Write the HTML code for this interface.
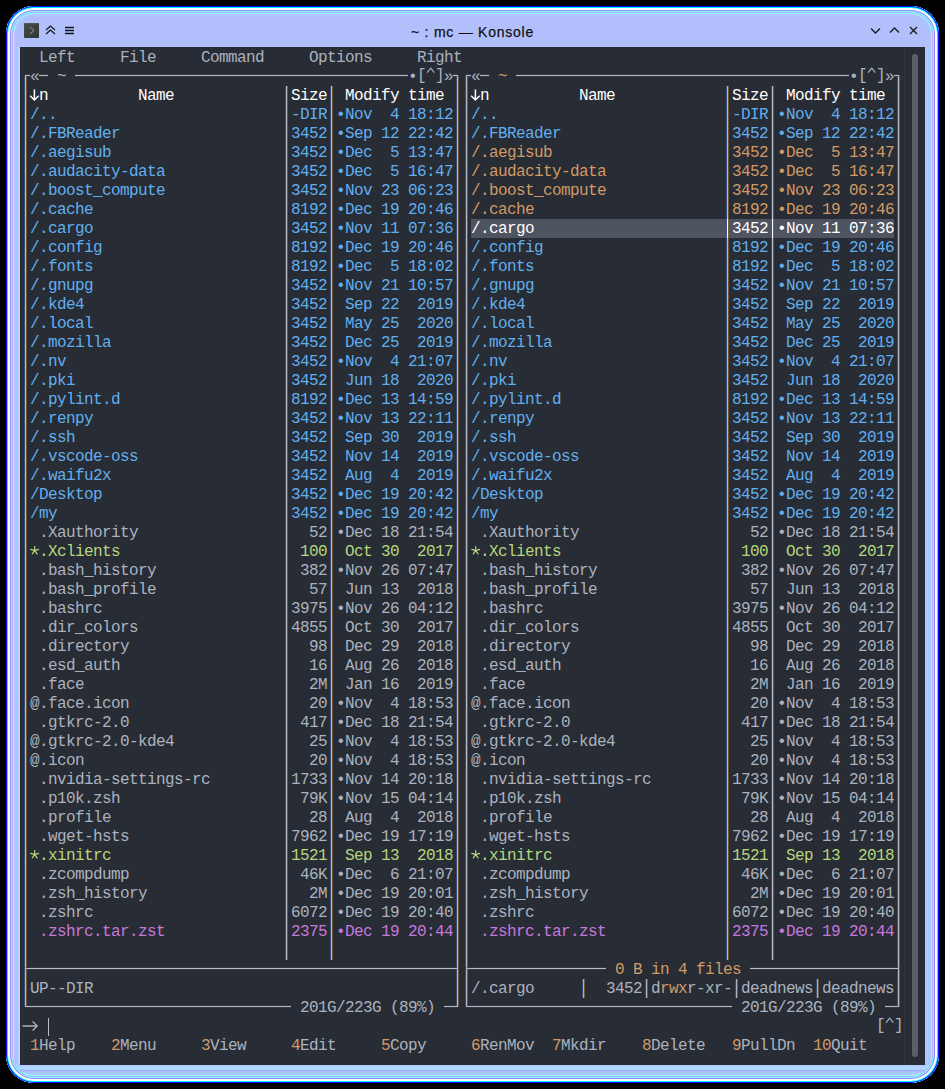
<!DOCTYPE html>
<html><head><meta charset="utf-8">
<style>
html,body{margin:0;padding:0;background:#000;width:945px;height:1089px;overflow:hidden;position:relative}
.win{position:absolute;left:6px;top:6px;width:933px;height:1077px;border-radius:28px;background:#b1c0fd;
box-shadow: inset 0 0 0 1px #1010ff, inset 0 0 0 2px #00f0ff, inset 0 0 0 4px #ffffff, inset 0 0 0 5px #8c8cff, inset 0 0 0 6px #80ffff, inset 0 0 0 7px #b0b0ff, inset 0 0 0 8px #90ffff, inset 0 0 0 9px #c0c0ff, inset 0 0 0 10px #a0ccff;}
.title{position:absolute;left:0;top:22px;width:945px;text-align:center;font-family:"Liberation Sans",sans-serif;font-size:14px;letter-spacing:0.75px;color:#111;line-height:20px;-webkit-text-stroke:0.25px #111}
.term{position:absolute;left:20px;top:47px;width:905px;height:1018px;background:#282c34}
.t{position:absolute;font-family:"Liberation Mono",monospace;font-size:16px;letter-spacing:-0.6px;line-height:19px;height:19px;white-space:pre;margin-top:1px}
.b{font-weight:normal}
.hl{position:absolute;height:1px;box-shadow:0 -1px 0 rgba(80,86,100,.35),0 1px 0 rgba(80,86,100,.35)}
.vl{position:absolute;width:1px;box-shadow:-1px 0 0 rgba(50,90,150,.75),1px 0 0 rgba(140,100,60,.75)}
.r{position:absolute}
.sb{position:absolute;left:904px;top:47px;width:1px;height:1018px;background:#33373f}
.handle{position:absolute;left:912px;top:54px;width:6px;height:1003px;border-radius:3px;background:#5a5e66}
</style></head><body>
<div class="win"></div>
<div class="title">~ : mc — Konsole</div>
<svg style="position:absolute;left:0;top:0" width="945" height="47">
 <defs><linearGradient id="kg" x1="0" y1="0" x2="1" y2="1"><stop offset="0" stop-color="#4a504c"/><stop offset="1" stop-color="#2e3230"/></linearGradient></defs>
 <rect x="24" y="23" width="15" height="15" rx="0.8" fill="url(#kg)"/><rect x="24" y="23" width="15" height="1" fill="#5a605c" opacity="0.6"/>
 <path d="M30 27 L34 30.5 L30 34" stroke="#a8aca8" stroke-width="0.8" fill="none"/>
 <path d="M46 30 L50.5 26 L55 30 M46 34 L50.5 30 L55 34" stroke="#111" stroke-width="1.1" fill="none"/>
 <path d="M65 27.5 H74 M65 30.5 H74 M65 33.5 H74" stroke="#111" stroke-width="1.4" fill="none"/>
 <path d="M871 28.5 L875.5 33 L880 28.5" stroke="#1b1b1b" stroke-width="1.4" fill="none"/>
 <path d="M890 32.5 L894.5 28 L899 32.5" stroke="#1b1b1b" stroke-width="1.4" fill="none"/>
 <path d="M910 27 L917 34 M917 27 L910 34" stroke="#1b1b1b" stroke-width="1.4" fill="none"/>
</svg>
<div class="r" style="left:14px;top:47px;width:6px;height:1018px;background:linear-gradient(90deg,#c0c0ff 0,#c0c0ff 1px,#9cccff 1px,#9cccff 3px,#c0c0ff 3px,#c0c0ff 5px,#bcdcff 5px)"></div>
<div class="r" style="left:925px;top:47px;width:6px;height:1018px;background:linear-gradient(90deg,#a8c8ff 0,#a8c8ff 2px,#c0c0ff 2px,#c0c0ff 3px,#9cccff 3px,#9cccff 5px,#c4c0ff 5px)"></div>
<div class="r" style="left:20px;top:1065px;width:905px;height:8px;background:linear-gradient(180deg,#b8c4fc 0,#b0d4ff 1px,#b4d8ff 4px,#90c4ff 5px,#b4a8ff 6px,#a4ccff 7px)"></div>
<div class="term"></div>
<div class="sb"></div>
<div class="handle"></div>
<div class="t" style="left:39px;top:48px;color:#abb2bf">Left</div>
<div class="t" style="left:120px;top:48px;color:#abb2bf">File</div>
<div class="t" style="left:201px;top:48px;color:#abb2bf">Command</div>
<div class="t" style="left:309px;top:48px;color:#abb2bf">Options</div>
<div class="t" style="left:417px;top:48px;color:#abb2bf">Right</div>
<div class="vl" style="left:25px;top:75px;height:932px;background:#b4bac6"></div>
<div class="vl" style="left:457px;top:75px;height:932px;background:#b4bac6"></div>
<div class="hl" style="left:25px;top:75px;width:5px;background:#b4bac6"></div>
<div class="hl" style="left:39px;top:75px;width:9px;background:#b4bac6"></div>
<div class="hl" style="left:75px;top:75px;width:333px;background:#b4bac6"></div>
<div class="hl" style="left:453px;top:75px;width:5px;background:#b4bac6"></div>
<div class="t" style="left:30px;top:67px;color:#abb2bf">«</div>
<div class="t" style="left:57px;top:67px;color:#abb2bf">~</div>
<div class="t" style="left:408px;top:67px;color:#abb2bf">•</div>
<div class="t" style="left:417px;top:66px;color:#abb2bf">[ ]</div>
<svg class="r" style="left:426px;top:67px" width="9" height="19"><path d="M1.1 5.6 L4.7 1.2 L8.3 5.6" stroke="#abb2bf" stroke-width="1.2" fill="none"/></svg>
<div class="t" style="left:444px;top:67px;color:#abb2bf">»</div>
<div class="vl" style="left:286px;top:86px;height:133px;background:#b4bac6"></div>
<div class="vl" style="left:286px;top:219px;height:19px;background:#b4bac6"></div>
<div class="vl" style="left:286px;top:238px;height:722px;background:#b4bac6"></div>
<div class="vl" style="left:331px;top:86px;height:133px;background:#b4bac6"></div>
<div class="vl" style="left:331px;top:219px;height:19px;background:#b4bac6"></div>
<div class="vl" style="left:331px;top:238px;height:722px;background:#b4bac6"></div>
<div class="t b" style="left:39px;top:86px;color:#ffffff">n</div>
<svg class="r" style="left:21px;top:86px" width="30" height="19"><path d="M13.4 3.6 V14 M9.1 9.8 L13.4 14 L17.7 9.8" stroke="#fff" stroke-width="1.5" fill="none"/></svg>
<div class="t b" style="left:138px;top:86px;color:#ffffff">Name</div>
<div class="t b" style="left:291px;top:86px;color:#ffffff">Size</div>
<div class="t b" style="left:345px;top:86px;color:#ffffff">Modify time</div>
<div class="t" style="left:30px;top:105px;color:#61afef">/..</div>
<div class="t" style="left:291px;top:105px;color:#61afef">-DIR</div>
<div class="t" style="left:336px;top:105px;color:#61afef">•Nov  4 18:12</div>
<div class="t" style="left:30px;top:124px;color:#61afef">/.FBReader</div>
<div class="t" style="left:291px;top:124px;color:#61afef">3452</div>
<div class="t" style="left:336px;top:124px;color:#61afef">•Sep 12 22:42</div>
<div class="t" style="left:30px;top:143px;color:#61afef">/.aegisub</div>
<div class="t" style="left:291px;top:143px;color:#61afef">3452</div>
<div class="t" style="left:336px;top:143px;color:#61afef">•Dec  5 13:47</div>
<div class="t" style="left:30px;top:162px;color:#61afef">/.audacity-data</div>
<div class="t" style="left:291px;top:162px;color:#61afef">3452</div>
<div class="t" style="left:336px;top:162px;color:#61afef">•Dec  5 16:47</div>
<div class="t" style="left:30px;top:181px;color:#61afef">/.boost_compute</div>
<div class="t" style="left:291px;top:181px;color:#61afef">3452</div>
<div class="t" style="left:336px;top:181px;color:#61afef">•Nov 23 06:23</div>
<div class="t" style="left:30px;top:200px;color:#61afef">/.cache</div>
<div class="t" style="left:291px;top:200px;color:#61afef">8192</div>
<div class="t" style="left:336px;top:200px;color:#61afef">•Dec 19 20:46</div>
<div class="t" style="left:30px;top:219px;color:#61afef">/.cargo</div>
<div class="t" style="left:291px;top:219px;color:#61afef">3452</div>
<div class="t" style="left:336px;top:219px;color:#61afef">•Nov 11 07:36</div>
<div class="t" style="left:30px;top:238px;color:#61afef">/.config</div>
<div class="t" style="left:291px;top:238px;color:#61afef">8192</div>
<div class="t" style="left:336px;top:238px;color:#61afef">•Dec 19 20:46</div>
<div class="t" style="left:30px;top:257px;color:#61afef">/.fonts</div>
<div class="t" style="left:291px;top:257px;color:#61afef">8192</div>
<div class="t" style="left:336px;top:257px;color:#61afef">•Dec  5 18:02</div>
<div class="t" style="left:30px;top:276px;color:#61afef">/.gnupg</div>
<div class="t" style="left:291px;top:276px;color:#61afef">3452</div>
<div class="t" style="left:336px;top:276px;color:#61afef">•Nov 21 10:57</div>
<div class="t" style="left:30px;top:295px;color:#61afef">/.kde4</div>
<div class="t" style="left:291px;top:295px;color:#61afef">3452</div>
<div class="t" style="left:336px;top:295px;color:#61afef"> Sep 22  2019</div>
<div class="t" style="left:30px;top:314px;color:#61afef">/.local</div>
<div class="t" style="left:291px;top:314px;color:#61afef">3452</div>
<div class="t" style="left:336px;top:314px;color:#61afef"> May 25  2020</div>
<div class="t" style="left:30px;top:333px;color:#61afef">/.mozilla</div>
<div class="t" style="left:291px;top:333px;color:#61afef">3452</div>
<div class="t" style="left:336px;top:333px;color:#61afef"> Dec 25  2019</div>
<div class="t" style="left:30px;top:352px;color:#61afef">/.nv</div>
<div class="t" style="left:291px;top:352px;color:#61afef">3452</div>
<div class="t" style="left:336px;top:352px;color:#61afef">•Nov  4 21:07</div>
<div class="t" style="left:30px;top:371px;color:#61afef">/.pki</div>
<div class="t" style="left:291px;top:371px;color:#61afef">3452</div>
<div class="t" style="left:336px;top:371px;color:#61afef"> Jun 18  2020</div>
<div class="t" style="left:30px;top:390px;color:#61afef">/.pylint.d</div>
<div class="t" style="left:291px;top:390px;color:#61afef">8192</div>
<div class="t" style="left:336px;top:390px;color:#61afef">•Dec 13 14:59</div>
<div class="t" style="left:30px;top:409px;color:#61afef">/.renpy</div>
<div class="t" style="left:291px;top:409px;color:#61afef">3452</div>
<div class="t" style="left:336px;top:409px;color:#61afef">•Nov 13 22:11</div>
<div class="t" style="left:30px;top:428px;color:#61afef">/.ssh</div>
<div class="t" style="left:291px;top:428px;color:#61afef">3452</div>
<div class="t" style="left:336px;top:428px;color:#61afef"> Sep 30  2019</div>
<div class="t" style="left:30px;top:447px;color:#61afef">/.vscode-oss</div>
<div class="t" style="left:291px;top:447px;color:#61afef">3452</div>
<div class="t" style="left:336px;top:447px;color:#61afef"> Nov 14  2019</div>
<div class="t" style="left:30px;top:466px;color:#61afef">/.waifu2x</div>
<div class="t" style="left:291px;top:466px;color:#61afef">3452</div>
<div class="t" style="left:336px;top:466px;color:#61afef"> Aug  4  2019</div>
<div class="t" style="left:30px;top:485px;color:#61afef">/Desktop</div>
<div class="t" style="left:291px;top:485px;color:#61afef">3452</div>
<div class="t" style="left:336px;top:485px;color:#61afef">•Dec 19 20:42</div>
<div class="t" style="left:30px;top:504px;color:#61afef">/my</div>
<div class="t" style="left:291px;top:504px;color:#61afef">3452</div>
<div class="t" style="left:336px;top:504px;color:#61afef">•Dec 19 20:42</div>
<div class="t" style="left:30px;top:523px;color:#abb2bf"> .Xauthority</div>
<div class="t" style="left:309px;top:523px;color:#abb2bf">52</div>
<div class="t" style="left:336px;top:523px;color:#abb2bf">•Dec 18 21:54</div>
<div class="t" style="left:39px;top:542px;color:#b5d67e">.Xclients</div>
<svg class="r" style="left:0;top:0" width="945" height="1089"><path d="M34.70 550.60 L34.70 546.50 M34.70 550.60 L38.60 549.33 M34.70 550.60 L37.11 553.92 M34.70 550.60 L32.29 553.92 M34.70 550.60 L30.80 549.33 " stroke="#b5d67e" stroke-width="1.25" stroke-linecap="round" fill="none"/></svg>
<div class="t" style="left:300px;top:542px;color:#b5d67e">100</div>
<div class="t" style="left:336px;top:542px;color:#b5d67e"> Oct 30  2017</div>
<div class="t" style="left:30px;top:561px;color:#abb2bf"> .bash_history</div>
<div class="t" style="left:300px;top:561px;color:#abb2bf">382</div>
<div class="t" style="left:336px;top:561px;color:#abb2bf">•Nov 26 07:47</div>
<div class="t" style="left:30px;top:580px;color:#abb2bf"> .bash_profile</div>
<div class="t" style="left:309px;top:580px;color:#abb2bf">57</div>
<div class="t" style="left:336px;top:580px;color:#abb2bf"> Jun 13  2018</div>
<div class="t" style="left:30px;top:599px;color:#abb2bf"> .bashrc</div>
<div class="t" style="left:291px;top:599px;color:#abb2bf">3975</div>
<div class="t" style="left:336px;top:599px;color:#abb2bf">•Nov 26 04:12</div>
<div class="t" style="left:30px;top:618px;color:#abb2bf"> .dir_colors</div>
<div class="t" style="left:291px;top:618px;color:#abb2bf">4855</div>
<div class="t" style="left:336px;top:618px;color:#abb2bf"> Oct 30  2017</div>
<div class="t" style="left:30px;top:637px;color:#abb2bf"> .directory</div>
<div class="t" style="left:309px;top:637px;color:#abb2bf">98</div>
<div class="t" style="left:336px;top:637px;color:#abb2bf"> Dec 29  2018</div>
<div class="t" style="left:30px;top:656px;color:#abb2bf"> .esd_auth</div>
<div class="t" style="left:309px;top:656px;color:#abb2bf">16</div>
<div class="t" style="left:336px;top:656px;color:#abb2bf"> Aug 26  2018</div>
<div class="t" style="left:30px;top:675px;color:#abb2bf"> .face</div>
<div class="t" style="left:309px;top:675px;color:#abb2bf">2M</div>
<div class="t" style="left:336px;top:675px;color:#abb2bf"> Jan 16  2019</div>
<div class="t" style="left:30px;top:694px;color:#abb2bf">@.face.icon</div>
<div class="t" style="left:309px;top:694px;color:#abb2bf">20</div>
<div class="t" style="left:336px;top:694px;color:#abb2bf">•Nov  4 18:53</div>
<div class="t" style="left:30px;top:713px;color:#abb2bf"> .gtkrc-2.0</div>
<div class="t" style="left:300px;top:713px;color:#abb2bf">417</div>
<div class="t" style="left:336px;top:713px;color:#abb2bf">•Dec 18 21:54</div>
<div class="t" style="left:30px;top:732px;color:#abb2bf">@.gtkrc-2.0-kde4</div>
<div class="t" style="left:309px;top:732px;color:#abb2bf">25</div>
<div class="t" style="left:336px;top:732px;color:#abb2bf">•Nov  4 18:53</div>
<div class="t" style="left:30px;top:751px;color:#abb2bf">@.icon</div>
<div class="t" style="left:309px;top:751px;color:#abb2bf">20</div>
<div class="t" style="left:336px;top:751px;color:#abb2bf">•Nov  4 18:53</div>
<div class="t" style="left:30px;top:770px;color:#abb2bf"> .nvidia-settings-rc</div>
<div class="t" style="left:291px;top:770px;color:#abb2bf">1733</div>
<div class="t" style="left:336px;top:770px;color:#abb2bf">•Nov 14 20:18</div>
<div class="t" style="left:30px;top:789px;color:#abb2bf"> .p10k.zsh</div>
<div class="t" style="left:300px;top:789px;color:#abb2bf">79K</div>
<div class="t" style="left:336px;top:789px;color:#abb2bf">•Nov 15 04:14</div>
<div class="t" style="left:30px;top:808px;color:#abb2bf"> .profile</div>
<div class="t" style="left:309px;top:808px;color:#abb2bf">28</div>
<div class="t" style="left:336px;top:808px;color:#abb2bf"> Aug  4  2018</div>
<div class="t" style="left:30px;top:827px;color:#abb2bf"> .wget-hsts</div>
<div class="t" style="left:291px;top:827px;color:#abb2bf">7962</div>
<div class="t" style="left:336px;top:827px;color:#abb2bf">•Dec 19 17:19</div>
<div class="t" style="left:39px;top:846px;color:#b5d67e">.xinitrc</div>
<svg class="r" style="left:0;top:0" width="945" height="1089"><path d="M34.70 854.60 L34.70 850.50 M34.70 854.60 L38.60 853.33 M34.70 854.60 L37.11 857.92 M34.70 854.60 L32.29 857.92 M34.70 854.60 L30.80 853.33 " stroke="#b5d67e" stroke-width="1.25" stroke-linecap="round" fill="none"/></svg>
<div class="t" style="left:291px;top:846px;color:#b5d67e">1521</div>
<div class="t" style="left:336px;top:846px;color:#b5d67e"> Sep 13  2018</div>
<div class="t" style="left:30px;top:865px;color:#abb2bf"> .zcompdump</div>
<div class="t" style="left:300px;top:865px;color:#abb2bf">46K</div>
<div class="t" style="left:336px;top:865px;color:#abb2bf">•Dec  6 21:07</div>
<div class="t" style="left:30px;top:884px;color:#abb2bf"> .zsh_history</div>
<div class="t" style="left:309px;top:884px;color:#abb2bf">2M</div>
<div class="t" style="left:336px;top:884px;color:#abb2bf">•Dec 19 20:01</div>
<div class="t" style="left:30px;top:903px;color:#abb2bf"> .zshrc</div>
<div class="t" style="left:291px;top:903px;color:#abb2bf">6072</div>
<div class="t" style="left:336px;top:903px;color:#abb2bf">•Dec 19 20:40</div>
<div class="t" style="left:30px;top:922px;color:#c678dd"> .zshrc.tar.zst</div>
<div class="t" style="left:291px;top:922px;color:#c678dd">2375</div>
<div class="t" style="left:336px;top:922px;color:#c678dd">•Dec 19 20:44</div>
<div class="hl" style="left:25px;top:968px;width:433px;background:#b4bac6"></div>
<div class="hl" style="left:25px;top:1006px;width:266px;background:#b4bac6"></div>
<div class="t" style="left:300px;top:998px;color:#abb2bf">201G/223G (89%)</div>
<div class="hl" style="left:444px;top:1006px;width:14px;background:#b4bac6"></div>
<div class="r" style="left:471px;top:219px;width:423px;height:19px;background:#4f5461"></div>
<div class="vl" style="left:466px;top:75px;height:932px;background:#b4bac6"></div>
<div class="vl" style="left:898px;top:75px;height:932px;background:#b4bac6"></div>
<div class="hl" style="left:466px;top:75px;width:5px;background:#b4bac6"></div>
<div class="hl" style="left:480px;top:75px;width:9px;background:#b4bac6"></div>
<div class="hl" style="left:516px;top:75px;width:333px;background:#b4bac6"></div>
<div class="hl" style="left:894px;top:75px;width:5px;background:#b4bac6"></div>
<div class="t" style="left:471px;top:67px;color:#abb2bf">«</div>
<div class="t" style="left:498px;top:67px;color:#d19a66">~</div>
<div class="t" style="left:849px;top:67px;color:#abb2bf">•</div>
<div class="t" style="left:858px;top:66px;color:#abb2bf">[ ]</div>
<svg class="r" style="left:867px;top:67px" width="9" height="19"><path d="M1.1 5.6 L4.7 1.2 L8.3 5.6" stroke="#abb2bf" stroke-width="1.2" fill="none"/></svg>
<div class="t" style="left:885px;top:67px;color:#abb2bf">»</div>
<div class="vl" style="left:727px;top:86px;height:133px;background:#b4bac6"></div>
<div class="vl" style="left:727px;top:219px;height:19px;background:#ffffff"></div>
<div class="vl" style="left:727px;top:238px;height:722px;background:#b4bac6"></div>
<div class="vl" style="left:772px;top:86px;height:133px;background:#b4bac6"></div>
<div class="vl" style="left:772px;top:219px;height:19px;background:#ffffff"></div>
<div class="vl" style="left:772px;top:238px;height:722px;background:#b4bac6"></div>
<div class="t b" style="left:480px;top:86px;color:#ffffff">n</div>
<svg class="r" style="left:462px;top:86px" width="30" height="19"><path d="M13.4 3.6 V14 M9.1 9.8 L13.4 14 L17.7 9.8" stroke="#fff" stroke-width="1.5" fill="none"/></svg>
<div class="t b" style="left:579px;top:86px;color:#ffffff">Name</div>
<div class="t b" style="left:732px;top:86px;color:#ffffff">Size</div>
<div class="t b" style="left:786px;top:86px;color:#ffffff">Modify time</div>
<div class="t" style="left:471px;top:105px;color:#61afef">/..</div>
<div class="t" style="left:732px;top:105px;color:#61afef">-DIR</div>
<div class="t" style="left:777px;top:105px;color:#61afef">•Nov  4 18:12</div>
<div class="t" style="left:471px;top:124px;color:#61afef">/.FBReader</div>
<div class="t" style="left:732px;top:124px;color:#61afef">3452</div>
<div class="t" style="left:777px;top:124px;color:#61afef">•Sep 12 22:42</div>
<div class="t" style="left:471px;top:143px;color:#d19a66">/.aegisub</div>
<div class="t" style="left:732px;top:143px;color:#d19a66">3452</div>
<div class="t" style="left:777px;top:143px;color:#d19a66">•Dec  5 13:47</div>
<div class="t" style="left:471px;top:162px;color:#d19a66">/.audacity-data</div>
<div class="t" style="left:732px;top:162px;color:#d19a66">3452</div>
<div class="t" style="left:777px;top:162px;color:#d19a66">•Dec  5 16:47</div>
<div class="t" style="left:471px;top:181px;color:#d19a66">/.boost_compute</div>
<div class="t" style="left:732px;top:181px;color:#d19a66">3452</div>
<div class="t" style="left:777px;top:181px;color:#d19a66">•Nov 23 06:23</div>
<div class="t" style="left:471px;top:200px;color:#d19a66">/.cache</div>
<div class="t" style="left:732px;top:200px;color:#d19a66">8192</div>
<div class="t" style="left:777px;top:200px;color:#d19a66">•Dec 19 20:46</div>
<div class="t" style="left:471px;top:219px;color:#ffffff">/.cargo</div>
<div class="t" style="left:732px;top:219px;color:#ffffff">3452</div>
<div class="t" style="left:777px;top:219px;color:#ffffff">•Nov 11 07:36</div>
<div class="t" style="left:471px;top:238px;color:#61afef">/.config</div>
<div class="t" style="left:732px;top:238px;color:#61afef">8192</div>
<div class="t" style="left:777px;top:238px;color:#61afef">•Dec 19 20:46</div>
<div class="t" style="left:471px;top:257px;color:#61afef">/.fonts</div>
<div class="t" style="left:732px;top:257px;color:#61afef">8192</div>
<div class="t" style="left:777px;top:257px;color:#61afef">•Dec  5 18:02</div>
<div class="t" style="left:471px;top:276px;color:#61afef">/.gnupg</div>
<div class="t" style="left:732px;top:276px;color:#61afef">3452</div>
<div class="t" style="left:777px;top:276px;color:#61afef">•Nov 21 10:57</div>
<div class="t" style="left:471px;top:295px;color:#61afef">/.kde4</div>
<div class="t" style="left:732px;top:295px;color:#61afef">3452</div>
<div class="t" style="left:777px;top:295px;color:#61afef"> Sep 22  2019</div>
<div class="t" style="left:471px;top:314px;color:#61afef">/.local</div>
<div class="t" style="left:732px;top:314px;color:#61afef">3452</div>
<div class="t" style="left:777px;top:314px;color:#61afef"> May 25  2020</div>
<div class="t" style="left:471px;top:333px;color:#61afef">/.mozilla</div>
<div class="t" style="left:732px;top:333px;color:#61afef">3452</div>
<div class="t" style="left:777px;top:333px;color:#61afef"> Dec 25  2019</div>
<div class="t" style="left:471px;top:352px;color:#61afef">/.nv</div>
<div class="t" style="left:732px;top:352px;color:#61afef">3452</div>
<div class="t" style="left:777px;top:352px;color:#61afef">•Nov  4 21:07</div>
<div class="t" style="left:471px;top:371px;color:#61afef">/.pki</div>
<div class="t" style="left:732px;top:371px;color:#61afef">3452</div>
<div class="t" style="left:777px;top:371px;color:#61afef"> Jun 18  2020</div>
<div class="t" style="left:471px;top:390px;color:#61afef">/.pylint.d</div>
<div class="t" style="left:732px;top:390px;color:#61afef">8192</div>
<div class="t" style="left:777px;top:390px;color:#61afef">•Dec 13 14:59</div>
<div class="t" style="left:471px;top:409px;color:#61afef">/.renpy</div>
<div class="t" style="left:732px;top:409px;color:#61afef">3452</div>
<div class="t" style="left:777px;top:409px;color:#61afef">•Nov 13 22:11</div>
<div class="t" style="left:471px;top:428px;color:#61afef">/.ssh</div>
<div class="t" style="left:732px;top:428px;color:#61afef">3452</div>
<div class="t" style="left:777px;top:428px;color:#61afef"> Sep 30  2019</div>
<div class="t" style="left:471px;top:447px;color:#61afef">/.vscode-oss</div>
<div class="t" style="left:732px;top:447px;color:#61afef">3452</div>
<div class="t" style="left:777px;top:447px;color:#61afef"> Nov 14  2019</div>
<div class="t" style="left:471px;top:466px;color:#61afef">/.waifu2x</div>
<div class="t" style="left:732px;top:466px;color:#61afef">3452</div>
<div class="t" style="left:777px;top:466px;color:#61afef"> Aug  4  2019</div>
<div class="t" style="left:471px;top:485px;color:#61afef">/Desktop</div>
<div class="t" style="left:732px;top:485px;color:#61afef">3452</div>
<div class="t" style="left:777px;top:485px;color:#61afef">•Dec 19 20:42</div>
<div class="t" style="left:471px;top:504px;color:#61afef">/my</div>
<div class="t" style="left:732px;top:504px;color:#61afef">3452</div>
<div class="t" style="left:777px;top:504px;color:#61afef">•Dec 19 20:42</div>
<div class="t" style="left:471px;top:523px;color:#abb2bf"> .Xauthority</div>
<div class="t" style="left:750px;top:523px;color:#abb2bf">52</div>
<div class="t" style="left:777px;top:523px;color:#abb2bf">•Dec 18 21:54</div>
<div class="t" style="left:480px;top:542px;color:#b5d67e">.Xclients</div>
<svg class="r" style="left:0;top:0" width="945" height="1089"><path d="M475.70 550.60 L475.70 546.50 M475.70 550.60 L479.60 549.33 M475.70 550.60 L478.11 553.92 M475.70 550.60 L473.29 553.92 M475.70 550.60 L471.80 549.33 " stroke="#b5d67e" stroke-width="1.25" stroke-linecap="round" fill="none"/></svg>
<div class="t" style="left:741px;top:542px;color:#b5d67e">100</div>
<div class="t" style="left:777px;top:542px;color:#b5d67e"> Oct 30  2017</div>
<div class="t" style="left:471px;top:561px;color:#abb2bf"> .bash_history</div>
<div class="t" style="left:741px;top:561px;color:#abb2bf">382</div>
<div class="t" style="left:777px;top:561px;color:#abb2bf">•Nov 26 07:47</div>
<div class="t" style="left:471px;top:580px;color:#abb2bf"> .bash_profile</div>
<div class="t" style="left:750px;top:580px;color:#abb2bf">57</div>
<div class="t" style="left:777px;top:580px;color:#abb2bf"> Jun 13  2018</div>
<div class="t" style="left:471px;top:599px;color:#abb2bf"> .bashrc</div>
<div class="t" style="left:732px;top:599px;color:#abb2bf">3975</div>
<div class="t" style="left:777px;top:599px;color:#abb2bf">•Nov 26 04:12</div>
<div class="t" style="left:471px;top:618px;color:#abb2bf"> .dir_colors</div>
<div class="t" style="left:732px;top:618px;color:#abb2bf">4855</div>
<div class="t" style="left:777px;top:618px;color:#abb2bf"> Oct 30  2017</div>
<div class="t" style="left:471px;top:637px;color:#abb2bf"> .directory</div>
<div class="t" style="left:750px;top:637px;color:#abb2bf">98</div>
<div class="t" style="left:777px;top:637px;color:#abb2bf"> Dec 29  2018</div>
<div class="t" style="left:471px;top:656px;color:#abb2bf"> .esd_auth</div>
<div class="t" style="left:750px;top:656px;color:#abb2bf">16</div>
<div class="t" style="left:777px;top:656px;color:#abb2bf"> Aug 26  2018</div>
<div class="t" style="left:471px;top:675px;color:#abb2bf"> .face</div>
<div class="t" style="left:750px;top:675px;color:#abb2bf">2M</div>
<div class="t" style="left:777px;top:675px;color:#abb2bf"> Jan 16  2019</div>
<div class="t" style="left:471px;top:694px;color:#abb2bf">@.face.icon</div>
<div class="t" style="left:750px;top:694px;color:#abb2bf">20</div>
<div class="t" style="left:777px;top:694px;color:#abb2bf">•Nov  4 18:53</div>
<div class="t" style="left:471px;top:713px;color:#abb2bf"> .gtkrc-2.0</div>
<div class="t" style="left:741px;top:713px;color:#abb2bf">417</div>
<div class="t" style="left:777px;top:713px;color:#abb2bf">•Dec 18 21:54</div>
<div class="t" style="left:471px;top:732px;color:#abb2bf">@.gtkrc-2.0-kde4</div>
<div class="t" style="left:750px;top:732px;color:#abb2bf">25</div>
<div class="t" style="left:777px;top:732px;color:#abb2bf">•Nov  4 18:53</div>
<div class="t" style="left:471px;top:751px;color:#abb2bf">@.icon</div>
<div class="t" style="left:750px;top:751px;color:#abb2bf">20</div>
<div class="t" style="left:777px;top:751px;color:#abb2bf">•Nov  4 18:53</div>
<div class="t" style="left:471px;top:770px;color:#abb2bf"> .nvidia-settings-rc</div>
<div class="t" style="left:732px;top:770px;color:#abb2bf">1733</div>
<div class="t" style="left:777px;top:770px;color:#abb2bf">•Nov 14 20:18</div>
<div class="t" style="left:471px;top:789px;color:#abb2bf"> .p10k.zsh</div>
<div class="t" style="left:741px;top:789px;color:#abb2bf">79K</div>
<div class="t" style="left:777px;top:789px;color:#abb2bf">•Nov 15 04:14</div>
<div class="t" style="left:471px;top:808px;color:#abb2bf"> .profile</div>
<div class="t" style="left:750px;top:808px;color:#abb2bf">28</div>
<div class="t" style="left:777px;top:808px;color:#abb2bf"> Aug  4  2018</div>
<div class="t" style="left:471px;top:827px;color:#abb2bf"> .wget-hsts</div>
<div class="t" style="left:732px;top:827px;color:#abb2bf">7962</div>
<div class="t" style="left:777px;top:827px;color:#abb2bf">•Dec 19 17:19</div>
<div class="t" style="left:480px;top:846px;color:#b5d67e">.xinitrc</div>
<svg class="r" style="left:0;top:0" width="945" height="1089"><path d="M475.70 854.60 L475.70 850.50 M475.70 854.60 L479.60 853.33 M475.70 854.60 L478.11 857.92 M475.70 854.60 L473.29 857.92 M475.70 854.60 L471.80 853.33 " stroke="#b5d67e" stroke-width="1.25" stroke-linecap="round" fill="none"/></svg>
<div class="t" style="left:732px;top:846px;color:#b5d67e">1521</div>
<div class="t" style="left:777px;top:846px;color:#b5d67e"> Sep 13  2018</div>
<div class="t" style="left:471px;top:865px;color:#abb2bf"> .zcompdump</div>
<div class="t" style="left:741px;top:865px;color:#abb2bf">46K</div>
<div class="t" style="left:777px;top:865px;color:#abb2bf">•Dec  6 21:07</div>
<div class="t" style="left:471px;top:884px;color:#abb2bf"> .zsh_history</div>
<div class="t" style="left:750px;top:884px;color:#abb2bf">2M</div>
<div class="t" style="left:777px;top:884px;color:#abb2bf">•Dec 19 20:01</div>
<div class="t" style="left:471px;top:903px;color:#abb2bf"> .zshrc</div>
<div class="t" style="left:732px;top:903px;color:#abb2bf">6072</div>
<div class="t" style="left:777px;top:903px;color:#abb2bf">•Dec 19 20:40</div>
<div class="t" style="left:471px;top:922px;color:#c678dd"> .zshrc.tar.zst</div>
<div class="t" style="left:732px;top:922px;color:#c678dd">2375</div>
<div class="t" style="left:777px;top:922px;color:#c678dd">•Dec 19 20:44</div>
<div class="hl" style="left:466px;top:968px;width:140px;background:#b4bac6"></div>
<div class="t" style="left:615px;top:960px;color:#d19a66">0 B in 4 files</div>
<div class="hl" style="left:750px;top:968px;width:149px;background:#b4bac6"></div>
<div class="hl" style="left:466px;top:1006px;width:266px;background:#b4bac6"></div>
<div class="t" style="left:741px;top:998px;color:#abb2bf">201G/223G (89%)</div>
<div class="hl" style="left:885px;top:1006px;width:14px;background:#b4bac6"></div>
<div class="t" style="left:30px;top:979px;color:#abb2bf">UP--DIR</div>
<div class="t" style="left:471px;top:979px;color:#abb2bf">/.cargo</div>
<div class="t" style="left:606px;top:979px;color:#abb2bf">3452</div>
<div class="t" style="left:651px;top:979px;color:#abb2bf">d</div>
<div class="t" style="left:660px;top:979px;color:#d19a66">rwx</div>
<div class="t" style="left:687px;top:979px;color:#abb2bf">r-xr-</div>
<div class="t" style="left:741px;top:979px;color:#abb2bf">deadnews</div>
<div class="t" style="left:822px;top:979px;color:#abb2bf">deadnews</div>
<div class="vl" style="left:583px;top:979px;height:19px;background:#abb2bf"></div>
<div class="vl" style="left:646px;top:979px;height:19px;background:#abb2bf"></div>
<div class="vl" style="left:736px;top:979px;height:19px;background:#abb2bf"></div>
<div class="vl" style="left:817px;top:979px;height:19px;background:#abb2bf"></div>
<div class="r" style="left:48px;top:1018px;width:1px;height:18px;background:#b8bec8"></div>
<svg class="r" style="left:0;top:1012px" width="60" height="30"><path d="M22.5 14 H37 M32.6 9.4 L37.2 14 L32.6 18.6" stroke="#abb2bf" stroke-width="1.35" fill="none"/></svg>
<div class="t" style="left:876px;top:1016px;color:#abb2bf">[ ]</div>
<svg class="r" style="left:885px;top:1017px" width="9" height="19"><path d="M1.1 5.6 L4.7 1.2 L8.3 5.6" stroke="#abb2bf" stroke-width="1.2" fill="none"/></svg>
<div class="t" style="left:30px;top:1036px;color:#d19a66">1</div>
<div class="t" style="left:39px;top:1036px;color:#abb2bf">Help</div>
<div class="t" style="left:111px;top:1036px;color:#d19a66">2</div>
<div class="t" style="left:120px;top:1036px;color:#abb2bf">Menu</div>
<div class="t" style="left:201px;top:1036px;color:#d19a66">3</div>
<div class="t" style="left:210px;top:1036px;color:#abb2bf">View</div>
<div class="t" style="left:291px;top:1036px;color:#d19a66">4</div>
<div class="t" style="left:300px;top:1036px;color:#abb2bf">Edit</div>
<div class="t" style="left:381px;top:1036px;color:#d19a66">5</div>
<div class="t" style="left:390px;top:1036px;color:#abb2bf">Copy</div>
<div class="t" style="left:471px;top:1036px;color:#d19a66">6</div>
<div class="t" style="left:480px;top:1036px;color:#abb2bf">RenMov</div>
<div class="t" style="left:552px;top:1036px;color:#d19a66">7</div>
<div class="t" style="left:561px;top:1036px;color:#abb2bf">Mkdir</div>
<div class="t" style="left:642px;top:1036px;color:#d19a66">8</div>
<div class="t" style="left:651px;top:1036px;color:#abb2bf">Delete</div>
<div class="t" style="left:732px;top:1036px;color:#d19a66">9</div>
<div class="t" style="left:741px;top:1036px;color:#abb2bf">PullDn</div>
<div class="t" style="left:813px;top:1036px;color:#d19a66">10</div>
<div class="t" style="left:831px;top:1036px;color:#abb2bf">Quit</div>
</body></html>
